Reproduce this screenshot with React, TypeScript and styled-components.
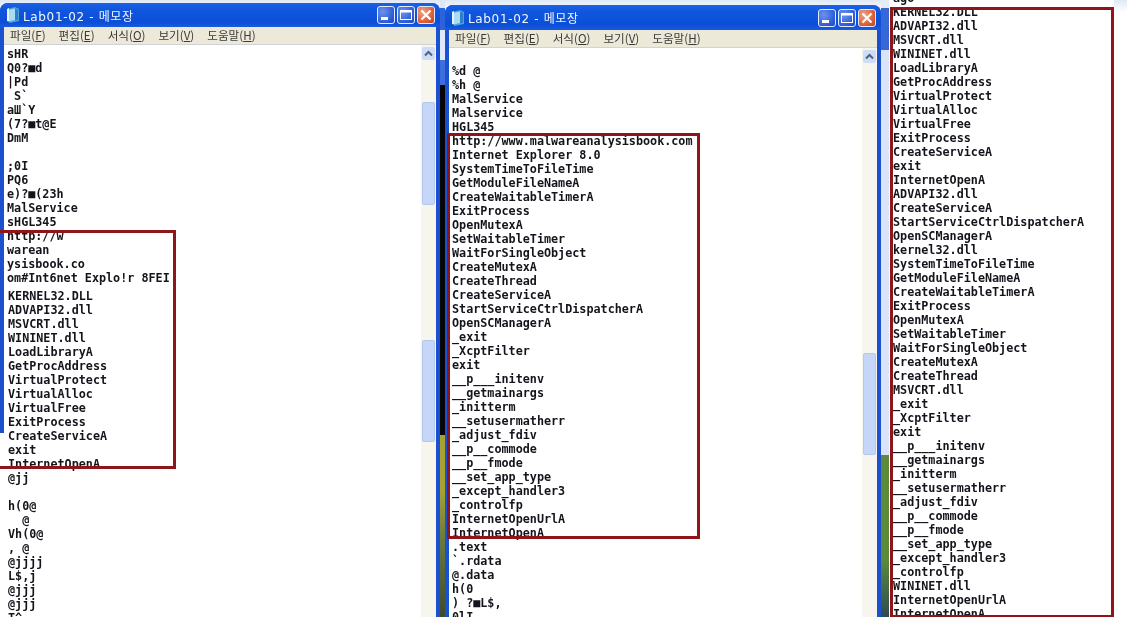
import styled, { createGlobalStyle } from 'styled-components';

const BLOCK = '\u25A0';

const firstWindowTop = ['sHR', `Q0?${BLOCK}d`, '|Pd', ' S`', 'a\u0428`Y', `(7?${BLOCK}t@E`, 'DmM', '', ';0I', 'PQ6', `e)?${BLOCK}(23h`, 'MalService', 'sHGL345', 'http://w', 'warean', 'ysisbook.co', `om#Int6net Explo!r 8FEI`];

const firstWindowRest = ['KERNEL32.DLL', 'ADVAPI32.dll', 'MSVCRT.dll', 'WININET.dll', 'LoadLibraryA', 'GetProcAddress', 'VirtualProtect', 'VirtualAlloc', 'VirtualFree', 'ExitProcess', 'CreateServiceA', 'exit', 'InternetOpenA', '@jj', '', 'h(0@', '  @', 'Vh(0@', ', @', '@jjjj', 'L$,j', '@jjj', '@jjj', 'T^'];

const secondWindow = ['', '%d @', '%h @', 'MalService', 'Malservice', 'HGL345', 'http://www.malwareanalysisbook.com', 'Internet Explorer 8.0', 'SystemTimeToFileTime', 'GetModuleFileNameA', 'CreateWaitableTimerA', 'ExitProcess', 'OpenMutexA', 'SetWaitableTimer', 'WaitForSingleObject', 'CreateMutexA', 'CreateThread', 'CreateServiceA', 'StartServiceCtrlDispatcherA', 'OpenSCManagerA', '_exit', '_XcptFilter', 'exit', '__p___initenv', '__getmainargs', '_initterm', '__setusermatherr', '_adjust_fdiv', '__p__commode', '__p__fmode', '__set_app_type', '_except_handler3', '_controlfp', 'InternetOpenUrlA', 'InternetOpenA', '.text', '`.rdata', '@.data', 'h(0', `) ?${BLOCK}L$,`, '0lI'];

const sidePanel = ['ago', 'KERNEL32.DLL', 'ADVAPI32.dll', 'MSVCRT.dll', 'WININET.dll', 'LoadLibraryA', 'GetProcAddress', 'VirtualProtect', 'VirtualAlloc', 'VirtualFree', 'ExitProcess', 'CreateServiceA', 'exit', 'InternetOpenA', 'ADVAPI32.dll', 'CreateServiceA', 'StartServiceCtrlDispatcherA', 'OpenSCManagerA', 'kernel32.dll', 'SystemTimeToFileTime', 'GetModuleFileNameA', 'CreateWaitableTimerA', 'ExitProcess', 'OpenMutexA', 'SetWaitableTimer', 'WaitForSingleObject', 'CreateMutexA', 'CreateThread', 'MSVCRT.dll', '_exit', '_XcptFilter', 'exit', '__p___initenv', '__getmainargs', '_initterm', '__setusermatherr', '_adjust_fdiv', '__p__commode', '__p__fmode', '__set_app_type', '_except_handler3', '_controlfp', 'WININET.dll', 'InternetOpenUrlA', 'InternetOpenA'];

const menus = [
  ['파일(', 'F', ')'],
  ['편집(', 'E', ')'],
  ['서식(', 'O', ')'],
  ['보기(', 'V', ')'],
  ['도움말(', 'H', ')'],
];

const NotepadIcon = () => (
  <svg width="16" height="18" viewBox="0 0 16 18">
    <path d="M2 3 L10 1 L14 3 L14 15 L5 17 L2 15 Z" fill="#4f9fdc" />
    <path d="M3 4 L10 2.5 L10 14 L4 15.5 Z" fill="#a9dcf4" />
    <path d="M10 2.5 L13 4 L13 14 L10 14 Z" fill="#2f7fc4" />
    <path d="M2 3 L4 2 L4 15 L2 15 Z" fill="#e8f4fb" />
  </svg>
);

const ChevronUp = () => (
  <svg width="9" height="7" viewBox="0 0 9 7">
    <path d="M1 5.5 L4.5 2 L8 5.5" fill="none" stroke="#4d6185" strokeWidth="2" />
  </svg>
);

const MinGlyph = () => (
  <svg width="12" height="12" viewBox="0 0 12 12">
    <rect x="1" y="8" width="7" height="3" fill="#fff" />
  </svg>
);

const MaxGlyph = () => (
  <svg width="12" height="12" viewBox="0 0 12 12">
    <rect x="0.5" y="1.5" width="11" height="9" fill="none" stroke="#fff" strokeWidth="1" />
    <rect x="0.5" y="1" width="11" height="2.5" fill="#fff" />
  </svg>
);

const CloseGlyph = () => (
  <svg width="12" height="12" viewBox="0 0 12 12">
    <path d="M1.5 1.5 L10.5 10.5 M10.5 1.5 L1.5 10.5" stroke="#fff" strokeWidth="2.2" />
  </svg>
);

const TextLines = ({ lines }: { lines: string[] }) => (
  <>
    {lines.map((line, i) => (
      <Line key={i}>{line}</Line>
    ))}
  </>
);

const Chrome = ({ tall }: { tall?: boolean }) => (
  <>
    <TitleBar $tall={tall}>
      <NotepadIcon />
      <TitleText>Lab01-02 - 메모장</TitleText>
      <TitleButton>
        <MinGlyph />
      </TitleButton>
      <TitleButton>
        <MaxGlyph />
      </TitleButton>
      <TitleButton $close>
        <CloseGlyph />
      </TitleButton>
    </TitleBar>
    <MenuBar>
      {menus.map(([before, key, after]) => (
        <MenuItem key={key}>
          {before}
          <u>{key}</u>
          {after}
        </MenuItem>
      ))}
    </MenuBar>
  </>
);

const App = () => {
  return (
    <>
      <GlobalStyle />
      <Desktop>
        <Window $top={3} $width={440} $fadeLeft>
          <Chrome />
          <Body>
            <TextArea>
              <TextLines lines={firstWindowTop} />
              <PastedBlock>
                <TextLines lines={firstWindowRest} />
              </PastedBlock>
            </TextArea>
            <ScrollBar>
              <ScrollButton>
                <ChevronUp />
              </ScrollButton>
              <Thumb $gap={42} $height={103} />
              <Thumb $gap={135} $height={102} />
            </ScrollBar>
          </Body>
        </Window>
        <Gutter />
        <Window $top={5} $width={436}>
          <Chrome tall />
          <Body>
            <TextArea>
              <TextLines lines={secondWindow} />
            </TextArea>
            <ScrollBar>
              <ScrollButton>
                <ChevronUp />
              </ScrollButton>
              <Thumb $gap={290} $height={102} />
            </ScrollBar>
          </Body>
        </Window>
        <NarrowGutter />
        <SidePanel>
          <TextLines lines={sidePanel} />
        </SidePanel>
        <Highlight $left={-3} $top={230} $width={179} $height={239} />
        <Highlight $left={447} $top={133} $width={253} $height={406} />
        <Highlight $left={890} $top={7} $width={224} $height={611} />
      </Desktop>
    </>
  );
};

export default App;

const GlobalStyle = createGlobalStyle`
  html, body {
    margin: 0;
    padding: 0;
    background: #fff;
  }
`;

const Desktop = styled.div`
  position: relative;
  display: flex;
  width: 1127px;
  height: 617px;
  overflow: hidden;
  background: linear-gradient(#dfe8f6, #ffffff 12px);
  filter: blur(0.35px);
`;

const Window = styled.div<{ $top: number; $width: number; $fadeLeft?: boolean }>`
  display: flex;
  flex-direction: column;
  flex: none;
  box-sizing: border-box;
  width: ${(p) => p.$width}px;
  margin-top: ${(p) => p.$top}px;
  padding: 0 4px;
  border-radius: 8px 8px 0 0;
  background: ${(p) =>
    p.$fadeLeft
      ? 'linear-gradient(#fff, #fff) 0 430px / 4px 100% no-repeat, #1b50cf'
      : '#1b50cf'};
`;

const TitleBar = styled.div<{ $tall?: boolean }>`
  display: flex;
  align-items: center;
  flex: none;
  height: ${(p) => (p.$tall ? 25 : 24)}px;
  margin: 0 -4px;
  padding: 0 5px;
  border-radius: 8px 8px 0 0;
  background: linear-gradient(#1a62e4, #0f55de 30%, #0b4fd6 80%, #1a5ae0);
`;

const TitleText = styled.span`
  flex: 1;
  margin-left: 2px;
  color: #f2f6ff;
  font-family: 'DejaVu Sans', 'Noto Sans CJK KR', sans-serif;
  font-size: 12px;
  letter-spacing: 0.65px;
  white-space: nowrap;
`;

const TitleButton = styled.div<{ $close?: boolean }>`
  display: flex;
  align-items: center;
  justify-content: center;
  box-sizing: border-box;
  width: 18px;
  height: 18px;
  margin-left: 2px;
  border: 1px solid #e4ecfb;
  border-radius: 3px;
  background: ${(p) =>
    p.$close
      ? 'radial-gradient(circle at 30% 30%, #f0a283, #d9582f 70%, #c23f1c)'
      : 'radial-gradient(circle at 30% 30%, #6c94ee, #2b5bd6 70%, #2048b8)'};
`;

const MenuBar = styled.div`
  display: flex;
  align-items: center;
  flex: none;
  gap: 13px;
  height: 15px;
  padding: 0 0 2px 6px;
  background: #ece9d8;
  border-bottom: 1px solid #cfd3d8;
  color: #3a3a3a;
  font-family: 'Noto Sans CJK KR', 'DejaVu Sans', sans-serif;
  font-size: 11.6px;
`;

const MenuItem = styled.span`
  white-space: nowrap;
`;

const Body = styled.div`
  display: flex;
  flex: 1;
  min-height: 0;
  background: #fff;
`;

const TextArea = styled.div`
  flex: 1;
  min-width: 0;
  padding: 2px 0 0 3px;
  overflow: hidden;
`;

const PastedBlock = styled.div`
  margin-top: 4px;
  padding-left: 1px;
`;

const Line = styled.div`
  height: 14px;
  color: #14141c;
  font-family: 'DejaVu Sans Mono', 'Liberation Mono', monospace;
  font-size: 11.75px;
  font-weight: 700;
  line-height: 14px;
  white-space: pre;
`;

const ScrollBar = styled.div`
  display: flex;
  flex-direction: column;
  align-items: center;
  flex: none;
  width: 15px;
  padding-top: 2px;
  background: #f6f5ee;
`;

const ScrollButton = styled.div`
  display: flex;
  align-items: center;
  justify-content: center;
  flex: none;
  width: 13px;
  height: 13px;
  border-radius: 2px;
  background: #cfdcf6;
`;

const Thumb = styled.div<{ $gap: number; $height: number }>`
  flex: none;
  box-sizing: border-box;
  width: 13px;
  height: ${(p) => p.$height}px;
  margin-top: ${(p) => p.$gap}px;
  border: 1px solid #b4c8ee;
  border-radius: 2px;
  background: #c6d6f9;
`;

const Gutter = styled.div`
  flex: none;
  width: 5px;
  background: linear-gradient(
    #dce6f5 0 8px,
    #2d62d8 8px 30px,
    #dfe8fb 30px 60px,
    #3d6fdc 60px 85px,
    #060608 85px 435px,
    #a8a233 435px 490px,
    #6b7a3c 540px,
    #3d4a30 617px
  );
`;

const NarrowGutter = styled.div`
  flex: none;
  width: 8px;
  background: linear-gradient(
    #e5ecf7 0 8px,
    #3768d8 8px 50px,
    #d9e4fa 50px 455px,
    #5e8a3d 455px 560px,
    #2d4a52 617px
  );
`;

const SidePanel = styled.div`
  flex: none;
  width: 225px;
  box-sizing: border-box;
  margin-top: -9px;
  padding-left: 4px;
  background: #fff;
`;

const Highlight = styled.div<{
  $left: number;
  $top: number;
  $width: number;
  $height: number;
}>`
  position: absolute;
  left: ${(p) => p.$left}px;
  top: ${(p) => p.$top}px;
  width: ${(p) => p.$width}px;
  height: ${(p) => p.$height}px;
  box-sizing: border-box;
  border: 3px solid #8e1519;
`;
